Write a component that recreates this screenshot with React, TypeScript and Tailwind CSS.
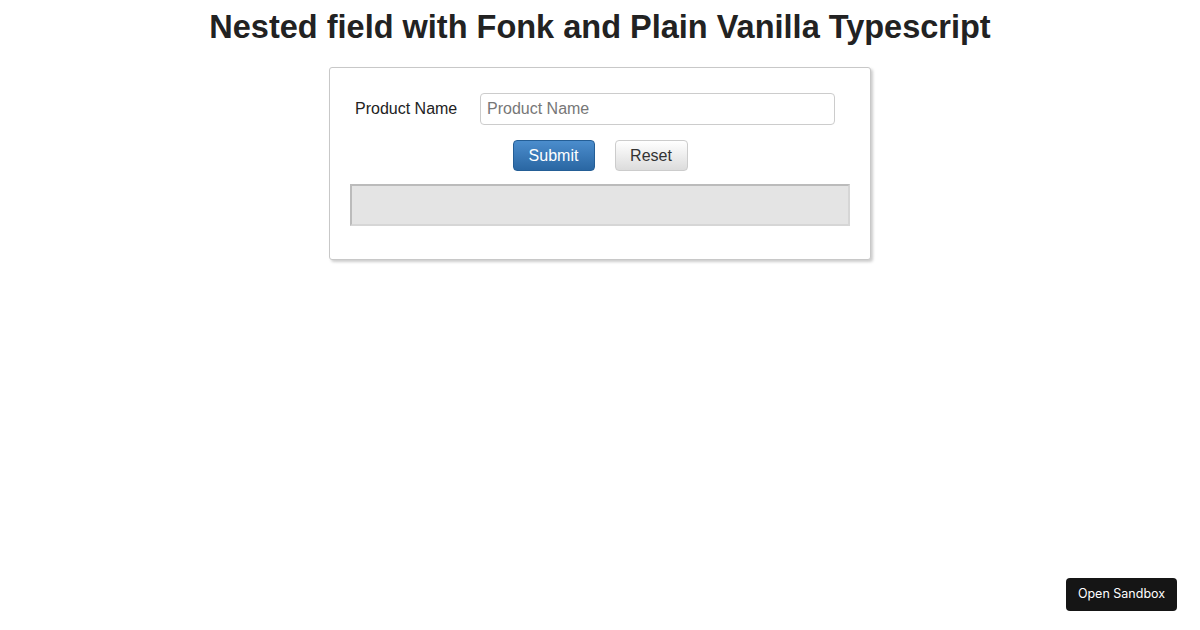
export default function App() {
  return (
    <div className="relative h-[630px] w-[1200px] bg-white font-['Liberation_Sans',Arial,sans-serif] text-[#222]">
      <h1 className="pt-[8px] text-center text-[32.5px] font-bold leading-[38px] text-[#222]">
        Nested field with Fonk and Plain Vanilla Typescript
      </h1>
      <div className="mx-auto mt-[21px] w-[542px] rounded-[3px] border border-[#c8c8c8] bg-white px-[20px] pt-[25px] pb-[33px] shadow-[2px_2px_3px_rgba(0,0,0,0.2)]">
        <div className="flex items-center">
          <label className="ml-[5px] w-[125px] text-[16px] text-[#222]">Product Name</label>
          <input
            placeholder="Product Name"
            className="h-[32px] w-[355px] rounded-[4px] border border-[#ccc] px-[6px] text-[16px] text-[#333] outline-none placeholder:text-[#777]"
          />
        </div>
        <div className="mt-[15px] flex justify-center gap-[20px]">
          <button className="h-[31px] w-[82px] rounded-[4px] border border-[#245e96] bg-gradient-to-b from-[#4b8dcd] to-[#2a67a3] text-[16px] text-white">
            Submit
          </button>
          <button className="h-[31px] w-[73px] rounded-[4px] border border-[#ccc] bg-gradient-to-b from-white to-[#dcdcdc] text-[16px] text-[#333]">
            Reset
          </button>
        </div>
        <div className="mt-[13px] h-[42px] w-[500px] border-2 border-t-[#bbb] border-l-[#bbb] border-r-[#d6d6d6] border-b-[#d6d6d6] bg-[#e4e4e4]" />
      </div>
      <div className="absolute right-[23px] bottom-[19px] flex h-[33px] w-[111px] items-center justify-center rounded-[4px] bg-[#151515] font-['Inter',sans-serif] text-[12.5px] text-white">
        Open Sandbox
      </div>
    </div>
  );
}
